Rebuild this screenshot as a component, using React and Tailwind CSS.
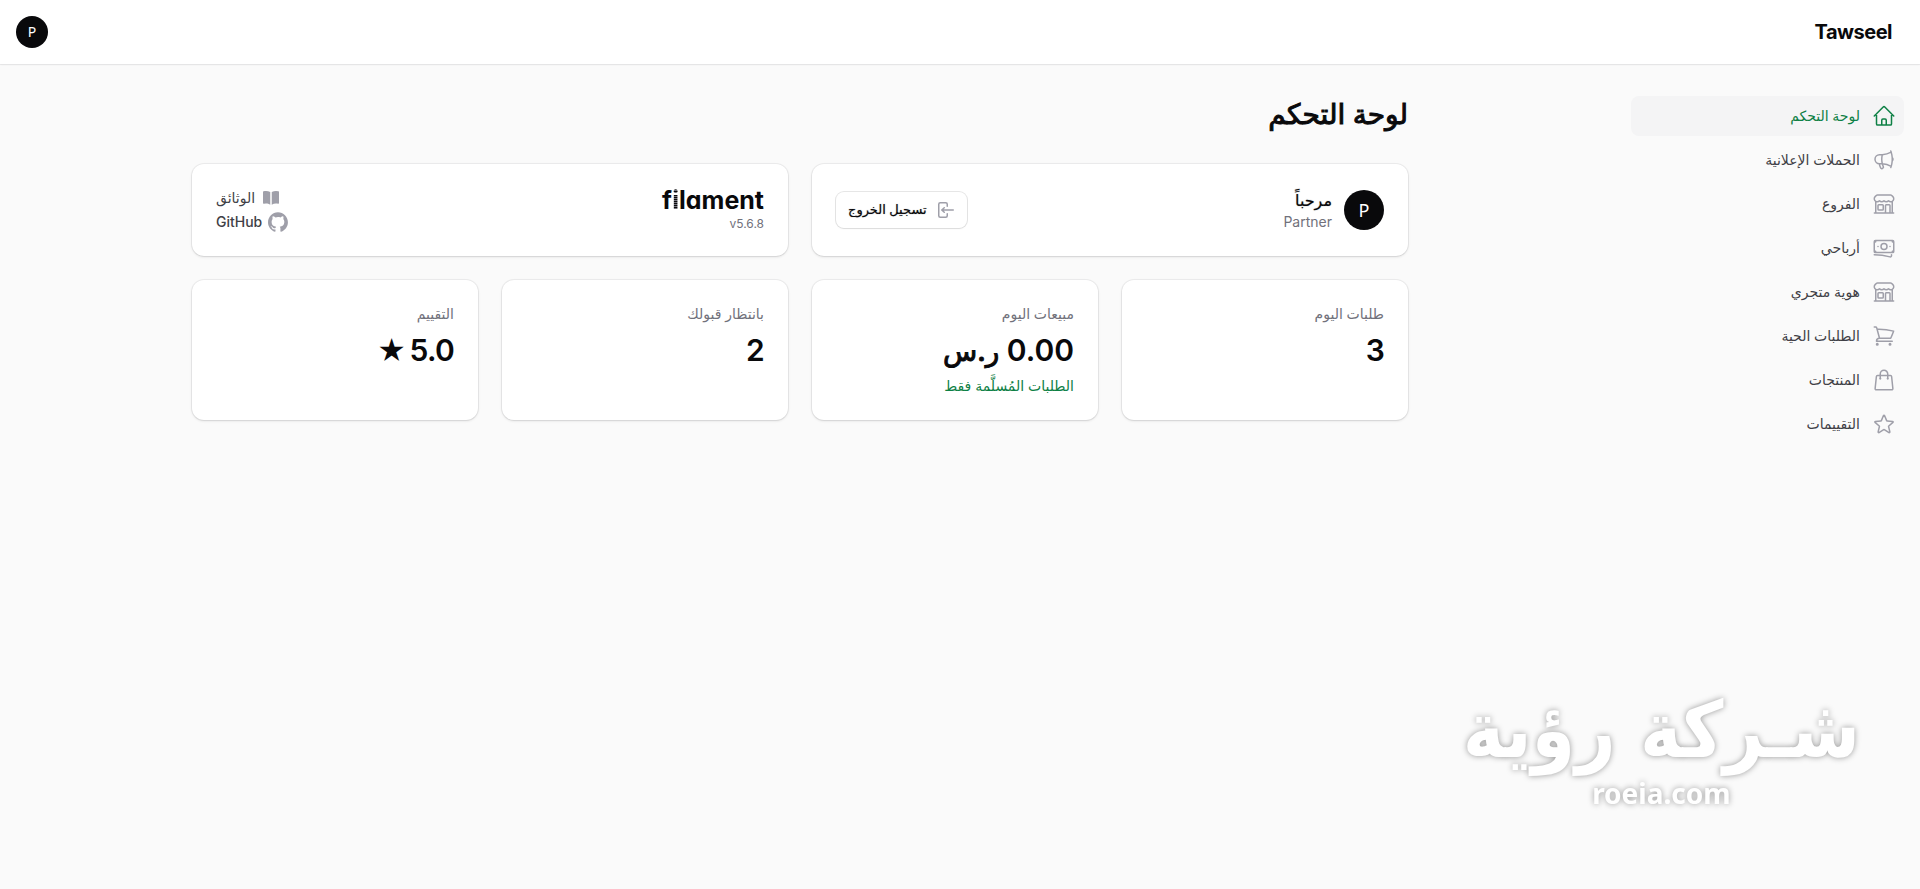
import React from 'react';
import {
  HiMiniArrowLeftOnRectangle,
  HiMiniBookOpen,
  HiOutlineBanknotes,
  HiOutlineBuildingStorefront,
  HiOutlineHome,
  HiOutlineMegaphone,
  HiOutlineShoppingBag,
  HiOutlineShoppingCart,
  HiOutlineStar,
} from 'react-icons/hi2';

const NAV_ITEMS = [
  { label: 'لوحة التحكم', icon: HiOutlineHome, active: true },
  { label: 'الحملات الإعلانية', icon: HiOutlineMegaphone },
  { label: 'الفروع', icon: HiOutlineBuildingStorefront },
  { label: 'أرباحي', icon: HiOutlineBanknotes },
  { label: 'هوية متجري', icon: HiOutlineBuildingStorefront },
  { label: 'الطلبات الحية', icon: HiOutlineShoppingCart },
  { label: 'المنتجات', icon: HiOutlineShoppingBag },
  { label: 'التقييمات', icon: HiOutlineStar },
];

const STATS = [
  { label: 'طلبات اليوم', value: '3' },
  { label: 'مبيعات اليوم', value: '0.00', unit: 'ر.س', description: 'الطلبات المُسلَّمة فقط' },
  { label: 'بانتظار قبولك', value: '2' },
  { label: 'التقييم', value: '5.0', star: true },
];

function GithubIcon() {
  return (
    <svg className="size-5 text-[#9f9fa9]" viewBox="0 0 98 96" fill="currentColor" aria-hidden="true">
      <path
        fillRule="evenodd"
        clipRule="evenodd"
        d="M48.854 0C21.839 0 0 22 0 49.217c0 21.756 13.993 40.172 33.405 46.69 2.427.49 3.316-1.059 3.316-2.362 0-1.141-.08-5.052-.08-9.127-13.59 2.934-16.42-5.867-16.42-5.867-2.184-5.704-5.42-7.17-5.42-7.17-4.448-3.015.324-3.015.324-3.015 4.934.326 7.523 5.052 7.523 5.052 4.367 7.496 11.404 5.378 14.235 4.074.404-3.178 1.699-5.378 3.074-6.6-10.839-1.141-22.243-5.378-22.243-24.283 0-5.378 1.94-9.778 5.014-13.2-.485-1.222-2.184-6.275.486-13.038 0 0 4.125-1.304 13.426 5.052a46.97 46.97 0 0 1 12.214-1.63c4.125 0 8.33.571 12.213 1.63 9.302-6.356 13.427-5.052 13.427-5.052 2.67 6.763.97 11.816.485 13.038 3.155 3.422 5.015 7.822 5.015 13.2 0 18.905-11.404 23.06-22.324 24.283 1.78 1.548 3.316 4.481 3.316 9.126 0 6.6-.08 11.897-.08 13.526 0 1.304.89 2.853 3.316 2.364 19.412-6.52 33.405-24.935 33.405-46.691C97.707 22 75.788 0 48.854 0z"
      />
    </svg>
  );
}

/**
 * White rounded panel used by every widget on the dashboard.
 */
function Card({ className = '', children }) {
  return (
    <section className={`rounded-xl bg-white shadow-sm ring-1 ring-[#09090b]/5 ${className}`}>
      {children}
    </section>
  );
}

function Topbar() {
  return (
    <header className="flex h-16 items-center justify-between bg-white ps-7 pe-4 shadow-xs ring-1 ring-[#09090b]/5">
      <a href="#" className="text-xl leading-5 font-bold tracking-tight">
        Tawseel
      </a>
      <button
        type="button"
        className="flex size-8 items-center justify-center rounded-full bg-[#09090b] font-['Noto_Sans',sans-serif] text-sm text-white"
      >
        P
      </button>
    </header>
  );
}

function Sidebar() {
  return (
    <aside className="w-80 shrink-0 py-8 ps-4 pe-[31px]">
      <nav>
        <ul className="flex flex-col gap-1">
          {NAV_ITEMS.map(({ label, icon: Icon, active }) => (
            <li key={label}>
              <a
                href="#"
                className={`flex h-10 items-center gap-3 rounded-lg px-2 text-sm font-medium ${
                  active ? 'bg-[#f4f4f5] text-[#0e8045]' : 'text-[#3f3f46]'
                }`}
              >
                <Icon className={`size-6 ${active ? 'text-[#0e8045]' : 'text-[#9f9fa9]'}`} />
                {label}
              </a>
            </li>
          ))}
        </ul>
      </nav>
    </aside>
  );
}

function AccountWidget() {
  return (
    <Card className="flex items-center gap-3 px-6">
      <div className="flex size-10 items-center justify-center rounded-full bg-[#09090b] font-['Noto_Sans',sans-serif] text-lg text-white">
        P
      </div>
      <div className="flex-1">
        <h2 className="text-base leading-6 font-medium [text-shadow:0_0_1px_rgb(9_9_11/0.5)]">مرحباً</h2>
        <p className="text-sm text-[#71717b]">Partner</p>
      </div>
      <button
        type="button"
        className="flex h-9 items-center gap-2 rounded-lg bg-white px-3 text-[13px] font-medium shadow-xs ring-1 ring-[#09090b]/10 [text-shadow:0_0_1px_rgb(9_9_11/0.5)]"
      >
        <HiMiniArrowLeftOnRectangle className="size-5 text-[#9f9fa9]" />
        تسجيل الخروج
      </button>
    </Card>
  );
}

function FilamentWidget() {
  return (
    <Card className="flex items-center justify-between px-6">
      <div>
        <a
          href="#"
          dir="ltr"
          className="block text-[25px] leading-6 font-bold [font-feature-settings:'cv11']"
        >
          f
          <span className="bg-[repeating-linear-gradient(#09090b_0_1px,#71717b_1px_2px)] bg-clip-text text-transparent">
            i
          </span>
          lament
        </a>
        <p className="mt-1 text-xs text-[#71717b]">v5.6.8</p>
      </div>
      <div className="flex flex-col items-end gap-1 text-sm font-medium text-[#3f3f46]">
        <a href="#" className="flex items-center gap-1.5">
          <HiMiniBookOpen className="size-5 text-[#9f9fa9]" />
          الوثائق
        </a>
        <a href="#" className="flex items-center gap-1.5">
          <GithubIcon />
          GitHub
        </a>
      </div>
    </Card>
  );
}

function StatCard({ label, value, unit, star, description }) {
  return (
    <Card className="flex min-h-[140px] flex-col gap-2 p-6">
      <span className="text-sm font-medium text-[#71717b]">{label}</span>
      <span className="text-3xl font-semibold tracking-tight">
        {value}
        {unit && <span className="text-[28px] leading-7 font-medium [-webkit-text-stroke:1px]"> {unit}</span>}
        {star && <span className="ms-1 text-[28px] leading-7 font-medium">★</span>}
      </span>
      {description && <span className="text-sm text-[#0e8045]">{description}</span>}
    </Card>
  );
}

function Watermark() {
  return (
    <div className="pointer-events-none fixed start-15 bottom-[77px] text-center font-bold text-white [text-shadow:0_0_6px_rgb(0_0_0/0.4)]">
      <p className="font-['DejaVu_Sans_Condensed','DejaVu_Sans',sans-serif] text-[78px] leading-[88px]">
        شـركة رؤية
      </p>
      <p className="font-['Noto_Sans',sans-serif] text-[28px] leading-[38px]">roeia.com</p>
    </div>
  );
}

export default function App() {
  return (
    <div
      dir="rtl"
      className="min-h-screen bg-[#fafafa] font-['Inter','DejaVu_Sans',sans-serif] text-[#09090b]"
    >
      <Topbar />
      <div className="flex">
        <Sidebar />
        <main className="mx-auto w-full max-w-7xl px-8 py-8">
          <h1 className="text-[28px] leading-9 font-medium tracking-tight [-webkit-text-stroke:1px]">
            لوحة التحكم
          </h1>
          <div className="mt-8 grid grid-cols-2 gap-6">
            <div className="grid h-[92px]">
              <AccountWidget />
            </div>
            <div className="grid h-[92px]">
              <FilamentWidget />
            </div>
          </div>
          <div className="mt-6 grid grid-cols-4 gap-6">
            {STATS.map((stat) => (
              <StatCard key={stat.label} {...stat} />
            ))}
          </div>
        </main>
      </div>
      <Watermark />
    </div>
  );
}
